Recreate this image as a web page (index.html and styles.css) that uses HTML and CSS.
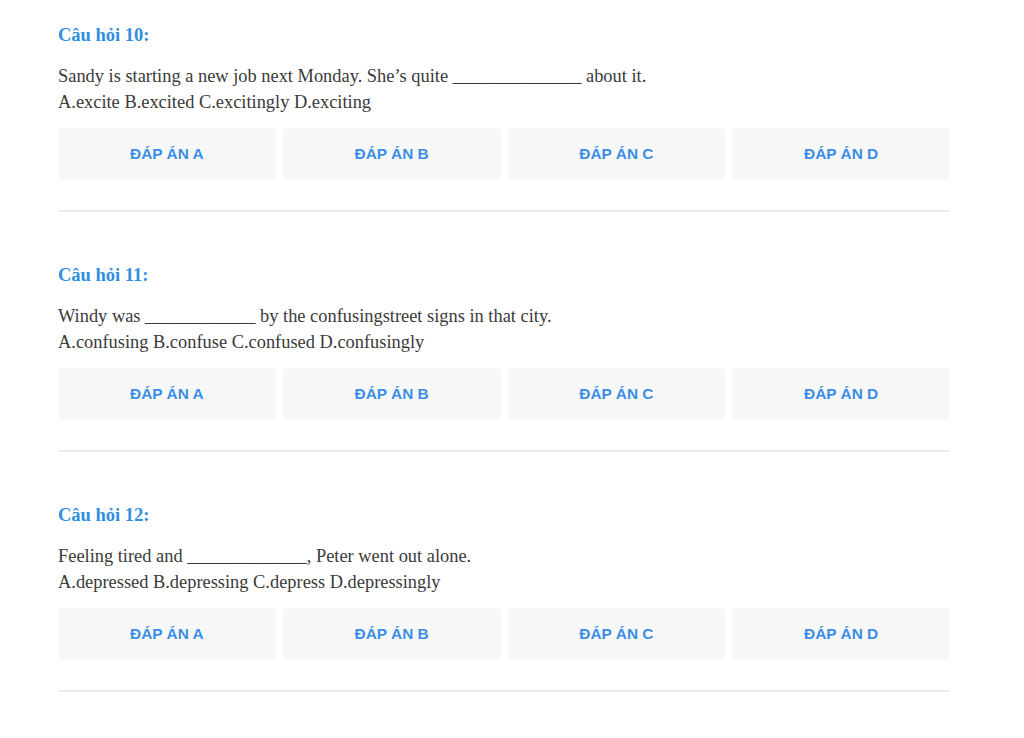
FILE: index.html
```html
<!DOCTYPE html>
<html lang="vi">
<head>
<meta charset="utf-8">
<title>Câu hỏi</title>
<link rel="stylesheet" href="styles.css">
</head>
<body>
<main class="quiz">
  <section class="question">
    <h3 class="q-title">Câu hỏi 10:</h3>
    <p class="q-text">Sandy is starting a new job next Monday. She’s quite ______________ about it.<br>A.excite B.excited C.excitingly D.exciting</p>
    <div class="answers">
      <button class="answer">ĐÁP ÁN A</button>
      <button class="answer">ĐÁP ÁN B</button>
      <button class="answer">ĐÁP ÁN C</button>
      <button class="answer">ĐÁP ÁN D</button>
    </div>
  </section>
  <section class="question">
    <h3 class="q-title">Câu hỏi 11:</h3>
    <p class="q-text">Windy was ____________ by the confusingstreet signs in that city.<br>A.confusing B.confuse C.confused D.confusingly</p>
    <div class="answers">
      <button class="answer">ĐÁP ÁN A</button>
      <button class="answer">ĐÁP ÁN B</button>
      <button class="answer">ĐÁP ÁN C</button>
      <button class="answer">ĐÁP ÁN D</button>
    </div>
  </section>
  <section class="question">
    <h3 class="q-title">Câu hỏi 12:</h3>
    <p class="q-text">Feeling tired and _____________, Peter went out alone.<br>A.depressed B.depressing C.depress D.depressingly</p>
    <div class="answers">
      <button class="answer">ĐÁP ÁN A</button>
      <button class="answer">ĐÁP ÁN B</button>
      <button class="answer">ĐÁP ÁN C</button>
      <button class="answer">ĐÁP ÁN D</button>
    </div>
  </section>
</main>
</body>
</html>
```
FILE: styles.css
```css
html, body {
  margin: 0;
  padding: 0;
  background: #ffffff;
}
body {
  font-family: "Liberation Serif", "Times New Roman", serif;
  color: #3a3a3a;
}
.quiz {
  width: 892px;
  margin-left: 58px;
  padding-top: 23px;
}
.question {
  border-bottom: 2px solid #ececec;
  padding-bottom: 30px;
  margin-bottom: 51px;
}
.q-title {
  margin: 0;
  font-size: 18.5px;
  line-height: 24px;
  font-weight: bold;
  color: #2f8fe0;
}
.q-text {
  margin: 16px 0 0;
  font-size: 18.4px;
  line-height: 26px;
}
.answers {
  margin-top: 13px;
  display: grid;
  grid-template-columns: repeat(4, 1fr);
  gap: 7px;
}
.answer {
  height: 52px;
  border: none;
  border-radius: 4px;
  background: #f8f8f8;
  font-family: "Liberation Sans", Arial, sans-serif;
  font-weight: bold;
  font-size: 15.4px;
  color: #3a8ee6;
  padding: 0;
  cursor: pointer;
}
```
